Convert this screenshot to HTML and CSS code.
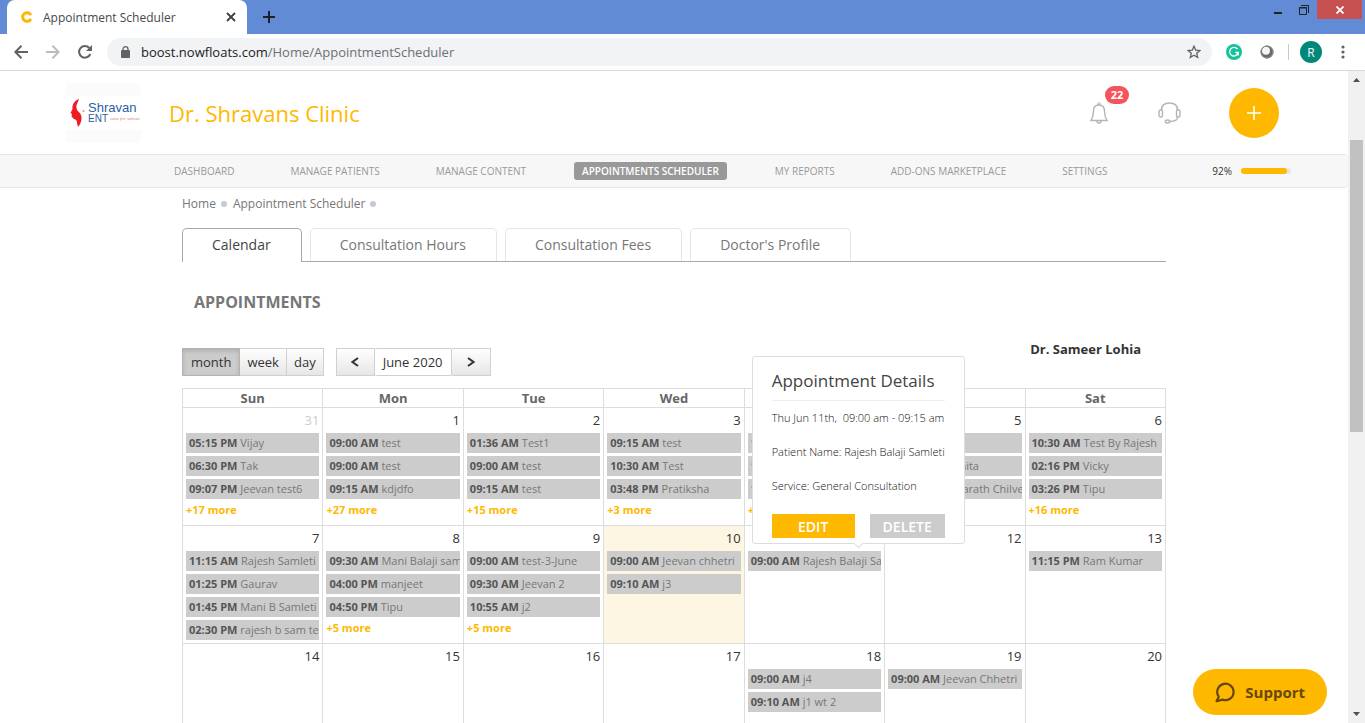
FILE: index.html
```
<!DOCTYPE html>
<html lang="en">
<head>
  <meta charset="UTF-8">
  <title>Appointment Scheduler</title>
  <meta name="viewport" content="width=device-width, initial-scale=1.0">
  <link rel="stylesheet" href="styles.css">
</head>
<body>
  <!-- Browser window -->
  <div class="tab-strip">
    <div class="browser-tab">
      <svg class="favicon" viewBox="0 0 12 12"><path d="M9.900 4.200A4.300 4.300 0 1 0 9.900 7.800" fill="none" stroke="#ffb800" stroke-width="3"/></svg>
      <span class="browser-tab-title">Appointment Scheduler</span>
      <button class="tab-btn" aria-label="Close tab">
        <svg width="10" height="10" viewBox="0 0 10 10"><path d="M1 1l8 8M9 1l-8 8" stroke="#3c4043" stroke-width="1.8"/></svg>
      </button>
    </div>
    <button class="tab-btn new-tab" aria-label="New tab">
      <svg width="12" height="12" viewBox="0 0 12 12"><path d="M6 0v12M0 6h12" stroke="#202124" stroke-width="2"/></svg>
    </button>
    <div class="window-btns">
      <button aria-label="Minimize"><svg width="8" height="12" viewBox="0 0 8 12"><path d="M0 9h8" stroke="#222" stroke-width="2"/></svg></button>
      <button aria-label="Restore"><svg width="10" height="10" viewBox="0 0 10 10"><path d="M.5 2.5h7v7h-7zM0 3h8M2 .5h7.5V8" fill="none" stroke="#222"/></svg></button>
      <button class="close" aria-label="Close window"><svg width="8" height="8" viewBox="0 0 8 8"><path d="M.5.5l7 7M7.500.5l-7 7" stroke="#fff" stroke-width="1.8"/></svg></button>
    </div>
  </div>

  <div class="toolbar">
    <button class="tool-btn" aria-label="Back"><svg width="14" height="14" viewBox="0 0 14 14"><path d="M14 7H1.500M7.500.8L1.300 7l6.200 6.200" fill="none" stroke="#5f6368" stroke-width="2"/></svg></button>
    <button class="tool-btn" aria-label="Forward"><svg width="14" height="14" viewBox="0 0 14 14"><path d="M0 7h12.500M6.500.8L12.700 7l-6.200 6.200" fill="none" stroke="#babcbe" stroke-width="2"/></svg></button>
    <button class="tool-btn" aria-label="Reload"><svg width="14" height="14" viewBox="0 0 14 14"><path d="M12.300 9A5.800 5.800 0 1 1 11.300 3" fill="none" stroke="#5f6368" stroke-width="2"/><path d="M14 0v6H8z" fill="#5f6368"/></svg></button>
    <div class="address">
      <svg width="9" height="12" viewBox="0 0 9 12"><rect y="4" width="9" height="8" rx="1" fill="#5f6368"/><path d="M2 5V3.200a2.500 2.500 0 0 1 5 0V5" fill="none" stroke="#5f6368" stroke-width="1.300"/></svg>
      <span class="url">boost.nowfloats.com<span>/Home/AppointmentScheduler</span></span>
      <svg width="14" height="14" viewBox="0 0 14 14"><path d="M7 1.200l1.700 3.900 4.200.4-3.200 2.800 1 4.200L7 10.300l-3.700 2.200 1-4.200L1.100 5.500l4.200-.4z" fill="none" stroke="#5f6368" stroke-width="1.300"/></svg>
    </div>
    <div class="extensions">
      <svg width="16" height="16" viewBox="0 0 16 16"><circle cx="8" cy="8" r="8" fill="#15c39a"/><path d="M11.500 5.200A4.300 4.300 0 1 0 12.200 8.500H9.300M12.200 8.500v3" fill="none" stroke="#fff" stroke-width="1.300"/></svg>
      <svg width="14" height="14" viewBox="0 0 14 14"><circle cx="7" cy="7" r="6.500" fill="#6a6a6a"/><circle cx="6" cy="5.700" r="4" fill="#f4f4f4"/><circle cx="7" cy="7" r="6" fill="none" stroke="#8d8d8d"/></svg>
    </div>
    <span class="divider"></span>
    <button class="profile">R</button>
    <button class="tool-btn" aria-label="Menu"><svg width="4" height="14" viewBox="0 0 4 14"><circle cx="2" cy="2" r="1.600" fill="#5f6368"/><circle cx="2" cy="7" r="1.600" fill="#5f6368"/><circle cx="2" cy="12" r="1.600" fill="#5f6368"/></svg></button>
  </div>

  <div class="viewport">
    <div class="page">
      <header>
        <a class="logo" href="#" aria-label="Shravan ENT">
          <span class="logo-inner">
            <svg width="15" height="28" viewBox="0 0 15 28"><path d="M9 0C4 2 2 6 2.500 10L.5 14l1.500 1-.5 2.500L4 20c2 .5 3 1.500 3 4l1 4c1-1 4-5 3.500-10S7 13 6.500 9 8 4 9 0z" fill="#ee1c25"/><circle cx="13.500" cy="12" r="1" fill="#f0888c"/></svg>
            <span class="logo-text">
              <span class="logo-name">Shravan</span>
              <span class="logo-line"><b>ENT</b><i>care for senses</i></span>
            </span>
          </span>
        </a>
        <h1>Dr. Shravans Clinic</h1>
        <div class="header-actions">
          <button class="icon-btn" aria-label="Notifications">
            <svg width="18" height="22" viewBox="0 0 18 22"><path d="M9 3c-4 0-5.500 2.500-5.500 6 0 4-.5 6.500-2.500 9.500h16c-2-3-2.500-5.500-2.500-9.500 0-3.500-1.500-6-5.500-6z" fill="none" stroke="#b5b5b5" stroke-width="1.400"/><circle cx="9" cy="2" r="1.300" fill="none" stroke="#b5b5b5"/><path d="M7 19a2 2 0 0 0 4 0" fill="none" stroke="#b5b5b5" stroke-width="1.400"/></svg>
            <span class="badge">22</span>
          </button>
          <button class="icon-btn" aria-label="Helpdesk">
            <svg width="23" height="22" viewBox="0 0 23 22"><path d="M3.500 8C3.500 3.500 6 1 11.500 1s8 2.500 8 7" fill="none" stroke="#b5b5b5" stroke-width="1.600"/><rect x="1" y="8" width="3.500" height="7" rx="1.500" fill="none" stroke="#b5b5b5" stroke-width="1.400"/><rect x="18.500" y="8" width="3.500" height="7" rx="1.500" fill="none" stroke="#b5b5b5" stroke-width="1.400"/><path d="M19.500 15c0 3-2 4.500-7.500 4.500" fill="none" stroke="#b5b5b5" stroke-width="1.400"/><ellipse cx="9.500" cy="19.500" rx="2.200" ry="1.500" fill="none" stroke="#b5b5b5" stroke-width="1.400"/></svg>
          </button>
          <button class="btn-add" aria-label="Add">
            <svg width="14" height="14" viewBox="0 0 14 14"><path d="M7 0v14M0 7h14" stroke="#fff" stroke-width="1.600"/></svg>
          </button>
        </div>
      </header>

      <nav class="main-nav">
        <ul>
          <li><a href="#">Dashboard</a></li>
          <li><a href="#">Manage Patients</a></li>
          <li><a href="#">Manage Content</a></li>
          <li><a class="active" href="#">Appointments Scheduler</a></li>
          <li><a href="#">My Reports</a></li>
          <li><a href="#">Add-ons Marketplace</a></li>
          <li><a href="#">Settings</a></li>
        </ul>
        <div class="completion">
          <span>92%</span>
          <div class="bar"><div class="bar-fill" style="width:92%"></div></div>
        </div>
      </nav>

      <main>
        <div class="breadcrumb">
          <a href="#">Home</a><i></i><a href="#">Appointment Scheduler</a><i></i>
        </div>

        <div class="tabs">
          <a class="tab active" href="#">Calendar</a>
          <a class="tab" href="#">Consultation Hours</a>
          <a class="tab" href="#">Consultation Fees</a>
          <a class="tab" href="#">Doctor's Profile</a>
        </div>

        <h2>Appointments</h2>

        <div class="cal-toolbar">
          <div class="btn-group">
            <button class="active">month</button><button>week</button><button>day</button>
          </div>
          <div class="btn-group">
            <button class="arrow" aria-label="Previous month"><svg width="8" height="10" viewBox="0 0 8 10"><path d="M7 1L1.500 5 7 9" fill="none" stroke="#333" stroke-width="2"/></svg></button><button class="current">June 2020</button><button class="arrow" aria-label="Next month"><svg width="8" height="10" viewBox="0 0 8 10"><path d="M1 1l5.500 4L1 9" fill="none" stroke="#333" stroke-width="2"/></svg></button>
          </div>
          <div class="doctor">Dr. Sameer Lohia</div>
        </div>

        <table class="calendar">
          <thead>
            <tr><th>Sun</th><th>Mon</th><th>Tue</th><th>Wed</th><th>Thu</th><th>Fri</th><th>Sat</th></tr>
          </thead>
          <tbody>
            <tr>
              <td>
                <div class="day other">31</div>
                <a class="event" href="#"><b>05:15 PM</b> Vijay</a>
                <a class="event" href="#"><b>06:30 PM</b> Tak</a>
                <a class="event" href="#"><b>09:07 PM</b> Jeevan test6</a>
                <a class="more" href="#">+17 more</a>
              </td>
              <td>
                <div class="day">1</div>
                <a class="event" href="#"><b>09:00 AM</b> test</a>
                <a class="event" href="#"><b>09:00 AM</b> test</a>
                <a class="event" href="#"><b>09:15 AM</b> kdjdfo</a>
                <a class="more" href="#">+27 more</a>
              </td>
              <td>
                <div class="day">2</div>
                <a class="event" href="#"><b>01:36 AM</b> Test1</a>
                <a class="event" href="#"><b>09:00 AM</b> test</a>
                <a class="event" href="#"><b>09:15 AM</b> test</a>
                <a class="more" href="#">+15 more</a>
              </td>
              <td>
                <div class="day">3</div>
                <a class="event" href="#"><b>09:15 AM</b> test</a>
                <a class="event" href="#"><b>10:30 AM</b> Test</a>
                <a class="event" href="#"><b>03:48 PM</b> Pratiksha</a>
                <a class="more" href="#">+3 more</a>
              </td>
              <td>
                <div class="day">4</div>
                <a class="event" href="#"><b>10:00 AM</b></a>
                <a class="event" href="#"><b>10:15 AM</b></a>
                <a class="event" href="#"><b>10:30 AM</b></a>
                <a class="more" href="#">+5 more</a>
              </td>
              <td>
                <div class="day">5</div>
                <a class="event" href="#"><b>09:00 AM</b></a>
                <a class="event" href="#"><b>09:15 AM</b> Nishita</a>
                <a class="event" href="#"><b>09:30 AM</b> Dasarath Chilver</a>
              </td>
              <td>
                <div class="day">6</div>
                <a class="event" href="#"><b>10:30 AM</b> Test By Rajesh</a>
                <a class="event" href="#"><b>02:16 PM</b> Vicky</a>
                <a class="event" href="#"><b>03:26 PM</b> Tipu</a>
                <a class="more" href="#">+16 more</a>
              </td>
            </tr>
            <tr>
              <td>
                <div class="day">7</div>
                <a class="event" href="#"><b>11:15 AM</b> Rajesh Samleti</a>
                <a class="event" href="#"><b>01:25 PM</b> Gaurav</a>
                <a class="event" href="#"><b>01:45 PM</b> Mani B Samleti</a>
                <a class="event" href="#"><b>02:30 PM</b> rajesh b sam test</a>
              </td>
              <td>
                <div class="day">8</div>
                <a class="event" href="#"><b>09:30 AM</b> Mani Balaji samleti</a>
                <a class="event" href="#"><b>04:00 PM</b> manjeet</a>
                <a class="event" href="#"><b>04:50 PM</b> Tipu</a>
                <a class="more" href="#">+5 more</a>
              </td>
              <td>
                <div class="day">9</div>
                <a class="event" href="#"><b>09:00 AM</b> test-3-June</a>
                <a class="event" href="#"><b>09:30 AM</b> Jeevan 2</a>
                <a class="event" href="#"><b>10:55 AM</b> j2</a>
                <a class="more" href="#">+5 more</a>
              </td>
              <td class="today">
                <div class="day">10</div>
                <a class="event" href="#"><b>09:00 AM</b> Jeevan chhetri</a>
                <a class="event" href="#"><b>09:10 AM</b> j3</a>
              </td>
              <td>
                <div class="day">11</div>
                <div class="event-wrap">
                  <a class="event" href="#"><b>09:00 AM</b> Rajesh Balaji Samleti</a>
                  <div class="popover">
                    <h3>Appointment Details</h3>
                    <p>Thu Jun 11th,&nbsp; 09:00 am - 09:15 am</p>
                    <p>Patient Name: Rajesh Balaji Samleti</p>
                    <p>Service: General Consultation</p>
                    <div class="popover-btns">
                      <button class="btn-edit">EDIT</button>
                      <button class="btn-delete">DELETE</button>
                    </div>
                  </div>
                </div>
              </td>
              <td>
                <div class="day">12</div>
              </td>
              <td>
                <div class="day">13</div>
                <a class="event" href="#"><b>11:15 PM</b> Ram Kumar</a>
              </td>
            </tr>
            <tr>
              <td><div class="day">14</div></td>
              <td><div class="day">15</div></td>
              <td><div class="day">16</div></td>
              <td><div class="day">17</div></td>
              <td>
                <div class="day">18</div>
                <a class="event" href="#"><b>09:00 AM</b> j4</a>
                <a class="event" href="#"><b>09:10 AM</b> j1 wt 2</a>
              </td>
              <td>
                <div class="day">19</div>
                <a class="event" href="#"><b>09:00 AM</b> Jeevan Chhetri</a>
              </td>
              <td><div class="day">20</div></td>
            </tr>
          </tbody>
        </table>
      </main>

      <button class="support">
        <svg width="20" height="21" viewBox="0 0 20 21"><path d="M3.800 14.800A8.200 8.200 0 1 1 7.500 17.600L1.500 19.300z" fill="none" stroke="#66490a" stroke-width="2.200" stroke-linejoin="round"/></svg>
        Support
      </button>
    </div>

    <div class="scrollbar">
      <svg width="7" height="4" viewBox="0 0 7 4"><path d="M3.500 0L7 4H0z" fill="#505050"/></svg>
      <div class="track"><div class="thumb"></div></div>
      <svg width="7" height="4" viewBox="0 0 7 4"><path d="M0 0h7L3.500 4z" fill="#505050"/></svg>
    </div>
  </div>
</body>
</html>
```
FILE: styles.css
```
* { box-sizing: border-box; }
body {
  margin: 0;
  height: 100vh;
  display: flex;
  flex-direction: column;
  overflow: hidden;
  font-family: 'Open Sans', 'Noto Sans', sans-serif;
  background: #fff;
  color: #333;
}
a { color: inherit; text-decoration: none; }
button {
  font-family: inherit;
  border: none;
  padding: 0;
  background: none;
  color: inherit;
  cursor: pointer;
}
svg { display: block; flex-shrink: 0; }

/* Browser window */
.tab-strip {
  display: flex;
  flex-shrink: 0;
  height: 34px;
  padding-left: 7px;
  background: #618bd5;
}
.browser-tab {
  display: flex;
  align-items: center;
  width: 240px;
  padding: 0 11px 0 14px;
  border-radius: 8px 8px 0 0;
  background: #fff;
  font-size: 12px;
  color: #45494d;
}
.favicon { width: 12px; height: 12px; }
.browser-tab-title { flex: 1; margin-left: 10px; }
.tab-btn { display: flex; align-items: center; }
.new-tab { margin-left: 16px; }
.window-btns {
  display: flex;
  margin-left: auto;
  padding-right: 3px;
}
.window-btns button {
  display: flex;
  align-items: center;
  justify-content: center;
  width: 26px;
  height: 19px;
}
.window-btns .close { width: 45px; background: #c75050; }

.toolbar {
  display: flex;
  align-items: center;
  flex-shrink: 0;
  height: 37px;
  padding: 0 6px 0 5px;
  border-bottom: 1px solid #d8d9db;
}
.tool-btn {
  display: flex;
  align-items: center;
  justify-content: center;
  width: 32px;
  height: 28px;
}
.address {
  flex: 1;
  display: flex;
  align-items: center;
  height: 28px;
  margin-left: 6px;
  padding: 0 11px 0 14px;
  border-radius: 14px;
  background: #f1f3f4;
}
.url {
  flex: 1;
  margin-left: 11px;
  font-size: 13px;
  color: #202124;
}
.url span { color: #6c7074; }
.extensions {
  display: flex;
  align-items: center;
  gap: 18px;
  margin-left: 14px;
}
.divider {
  width: 1px;
  height: 16px;
  margin: 0 11px 0 14px;
  background: #c8cacc;
}
.profile {
  width: 22px;
  height: 22px;
  margin-right: 5px;
  border-radius: 50%;
  background: #00897b;
  color: #fff;
  font-size: 12px;
}

/* Viewport and scrollbar */
.viewport {
  flex: 1;
  display: flex;
  min-height: 0;
}
.page {
  flex: 1;
  position: relative;
  overflow: hidden;
}
.scrollbar {
  display: flex;
  flex-direction: column;
  align-items: center;
  width: 17px;
  padding: 7px 2px;
  background: #f1f1f1;
}
.track { flex: 1; width: 100%; padding-top: 58px; }
.thumb { height: 51%; background: #c1c1c1; }

/* Header */
header {
  display: flex;
  align-items: center;
  height: 83px;
  padding: 0 69px 0 66px;
}
.logo {
  width: 75px;
  height: 60px;
  padding: 13px 0;
  border-radius: 4px;
  background: #fbfbfb;
}
.logo-inner {
  display: flex;
  align-items: center;
  height: 34px;
  padding-left: 4px;
  gap: 3px;
  background: #fff;
  font-family: 'Liberation Sans', Arial, sans-serif;
}
.logo-text { color: #2c5fa3; line-height: 11px; }
.logo-name { display: block; font-size: 13px; }
.logo-line { display: flex; gap: 2px; font-size: 10px; }
.logo-line i {
  font-family: 'Liberation Serif', serif;
  font-size: 5px;
  color: #e2786a;
}
.logo-line b { font-weight: 400; }
h1 {
  margin: 0 0 0 28px;
  font-size: 22px;
  font-weight: 400;
  color: #ffb800;
}
.header-actions {
  display: flex;
  align-items: center;
  margin-left: auto;
}
.icon-btn { position: relative; margin-right: 50px; }
.icon-btn + .icon-btn { margin-right: 48px; }
.badge {
  position: absolute;
  left: 15px;
  top: -16px;
  width: 24px;
  border-radius: 9px;
  background: #f4545c;
  color: #fff;
  font-size: 11px;
  font-weight: 700;
  line-height: 18px;
}
.btn-add {
  display: flex;
  align-items: center;
  justify-content: center;
  width: 50px;
  height: 50px;
  border-radius: 50%;
  background: #ffb800;
}

/* Main nav */
.main-nav {
  display: flex;
  align-items: center;
  justify-content: space-between;
  height: 34px;
  padding: 0 57px 0 166px;
  border: 1px solid #e7e7e7;
  border-width: 1px 0;
  border-radius: 0 4px 4px 0;
  background: #f7f7f7;
  font-size: 10px;
}
.main-nav ul {
  display: flex;
  gap: 40px;
  margin: 0;
  padding: 0;
  list-style: none;
}
.main-nav a {
  display: block;
  padding: 0 8px;
  border-radius: 3px;
  line-height: 18px;
  text-transform: uppercase;
  color: #999;
}
.main-nav a.active {
  background: #999;
  color: #fff;
  font-weight: 600;
}
.completion { display: flex; align-items: center; gap: 9px; }
.bar {
  width: 50px;
  height: 6px;
  border-radius: 3px;
  background: #e6e6e6;
}
.bar-fill {
  height: 6px;
  border-radius: 3px;
  background: #ffb800;
}

/* Content */
main {
  max-width: 984px;
  margin: 0 auto;
}
.breadcrumb {
  display: flex;
  align-items: center;
  height: 30px;
  font-size: 12px;
  color: #777;
}
.breadcrumb i {
  width: 6px;
  height: 6px;
  margin: 2px 6px 0 5px;
  border-radius: 50%;
  background: #c5cad6;
}
.tabs {
  display: flex;
  gap: 8px;
  margin-top: 10px;
  border-bottom: 1px solid #aaa;
}
.tab {
  height: 33px;
  padding: 0 30px 0 29px;
  border: 1px solid #e5e5e5;
  border-bottom: none;
  border-radius: 5px 5px 0 0;
  font-size: 14px;
  line-height: 32px;
  color: #777;
}
.tab.active {
  height: 34px;
  margin-bottom: -1px;
  border-color: #aaa;
  background: #fff;
  color: #444;
}
h2 {
  margin: 28px 0 0 12px;
  font-size: 16px;
  font-weight: 700;
  line-height: 24px;
  text-transform: uppercase;
  color: #777;
}

/* Calendar toolbar */
.cal-toolbar {
  display: flex;
  align-items: flex-start;
  height: 40px;
  margin-top: 34px;
}
.btn-group { display: flex; margin-right: 12px; }
.btn-group button {
  height: 28px;
  padding: 0 7px;
  border: 1px solid #d0d0d0;
  border-left-width: 0;
  background: linear-gradient(#fff, #e6e6e6);
  font-size: 13px;
  color: #333;
}
.btn-group button:first-child { border-left-width: 1px; }
.btn-group .active {
  padding: 0 8px;
  background: #ccc;
  border-color: #b3b3b3;
  box-shadow: inset 0 2px 4px rgba(0,0,0,0.15);
}
.btn-group .current {
  padding: 0 8px;
  background: #fff;
  border-radius: 2px;
  font-weight: 500;
}
.btn-group .arrow {
  display: flex;
  align-items: center;
  justify-content: center;
  width: 39px;
}
.doctor {
  margin-left: auto;
  padding-right: 25px;
  font-size: 13px;
  font-weight: 700;
  line-height: 3px;
}

/* Calendar */
.calendar {
  width: 100%;
  table-layout: fixed;
  border-collapse: collapse;
}
.calendar th, .calendar td {
  padding: 0;
  border: 1px solid #ddd;
}
.calendar th {
  height: 19px;
  font-size: 13px;
  line-height: 18px;
  color: #666;
}
.calendar td {
  height: 118px;
  vertical-align: top;
}
.calendar .today { background: #fdf6e3; }
.day {
  padding: 3px 3px 0 0;
  height: 25px;
  font-size: 13px;
  line-height: 18px;
  text-align: right;
}
.day.other { color: #ccc; }
.event {
  display: block;
  height: 20px;
  margin: 0 3px 3px 3px;
  padding-left: 3px;
  overflow: hidden;
  background: #ccc;
  font-size: 11px;
  line-height: 20px;
  white-space: nowrap;
  color: #777;
}
.event b { color: #555; }
.more {
  display: block;
  padding-left: 3px;
  font-size: 11px;
  font-weight: 700;
  line-height: 16px;
  color: #ffb800;
}

/* Appointment popover */
.event-wrap { position: relative; }
.popover {
  position: absolute;
  left: 7px;
  bottom: 27px;
  z-index: 2;
  width: 213px;
  padding: 12px 19px 5px;
  border: 1px solid #ddd;
  border-radius: 3px;
  background: #fff;
  font-size: 11px;
}
.popover::after {
  content: '';
  position: absolute;
  left: 102px;
  bottom: -4px;
  width: 6px;
  height: 6px;
  border: 1px solid #ddd;
  border-width: 0 1px 1px 0;
  background: #fff;
  transform: rotate(45deg);
}
.popover h3 {
  margin: 0 0 8px;
  padding-bottom: 7px;
  border-bottom: 1px solid #eee;
  font-size: 17px;
  font-weight: 400;
  line-height: 24px;
  color: #444;
}
.popover p {
  margin: 0 0 16px;
  font-weight: 300;
  line-height: 18px;
  white-space: nowrap;
  color: #111;
}
.popover-btns {
  display: flex;
  gap: 15px;
  margin-top: 19px;
}
.popover-btns button {
  height: 24px;
  color: #fff;
  font-size: 14px;
  font-weight: 600;
}
.btn-edit { width: 83px; background: #ffb800; }
.popover-btns .btn-edit { background: #ffb800; }
.popover-btns .btn-delete { flex: 1; background: #ccc; }

/* Support */
.support {
  position: absolute;
  right: 21px;
  bottom: 8px;
  display: flex;
  align-items: center;
  gap: 10px;
  height: 46px;
  padding: 0 22px;
  border-radius: 23px;
  background: #ffb800;
  color: #66490a;
  font-size: 15px;
  font-weight: 700;
}
```
